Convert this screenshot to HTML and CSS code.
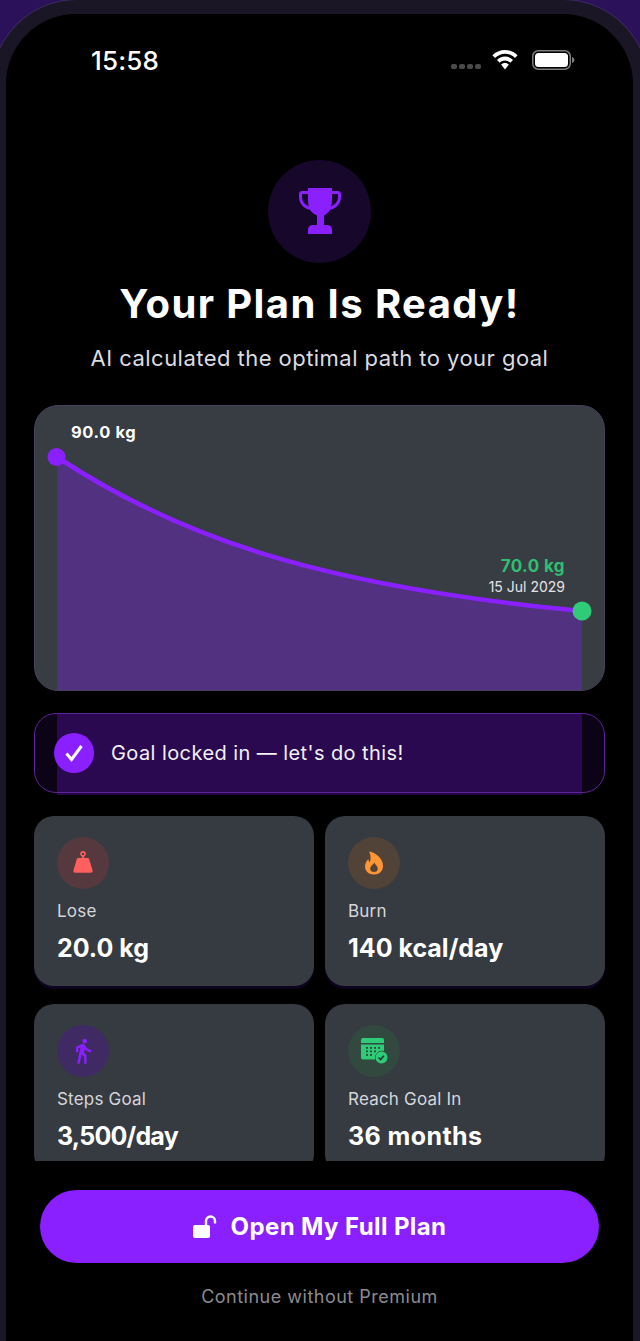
FILE: index.html
```html
<!DOCTYPE html>
<html lang="en">
<head>
<meta charset="utf-8">
<title>Your Plan Is Ready</title>
<link rel="stylesheet" href="styles.css">
</head>
<body>
<div class="bezel">
  <div class="screen">
    <div class="status">
      <span class="time">15:58</span>
      <div class="status-icons">
        <span class="signal"><i></i><i></i><i></i><i></i></span>
        <svg class="wifi" viewBox="0 0 26 20"><path d="M13 0C8 0 3.600 2 .4 5.300l2.700 2.700C5.700 5.300 9.100 3.700 13 3.700s7.300 1.600 9.900 4.300l2.700-2.700C22.400 2 18 0 13 0z"/><path d="M13 6.600c-3.200 0-6 1.300-8 3.400l2.700 2.700c1.400-1.400 3.200-2.300 5.300-2.300s3.900.9 5.300 2.300l2.700-2.700c-2-2.100-4.800-3.400-8-3.400z"/><path d="M13 13c-1.500 0-2.900.6-3.900 1.600L13 19.500l3.900-4.900c-1-1-2.400-1.600-3.900-1.600z"/></svg>
        <svg class="battery" viewBox="0 0 43 20"><rect x=".75" y=".75" width="37.500" height="18.500" rx="5.500" fill="none" stroke="#7d7d80" stroke-width="1.500"/><rect x="3" y="3" width="33" height="14" rx="3.500" fill="#fff"/><path d="M40 7v6c1.400-.4 2.400-1.600 2.400-3S41.400 7.400 40 7z" fill="#7d7d80"/></svg>
      </div>
    </div>

    <div class="scroll">
      <div class="glow"></div>
      <div class="hero-badge">
        <svg class="trophy" viewBox="0 0 42 48"><path d="M9 0h24v3h6c1.600 0 3 1.300 3 3v3c0 6.500-4.500 11.500-11 12.800-1.500 2.800-3.700 4.700-6 5.600V37h3.500c2.500 0 4.500 2 4.500 4.500V46H9v-4.500C9 39 11 37 13.500 37H18v-9.600c-2.300-.9-5.500-2.800-7-5.600C4.500 20.500 0 15.500 0 9V6c0-1.700 1.400-3 3-3h6V0zM3 6v3c0 4.200 2.600 7.600 6.800 9.200-.6-2.300-.8-5.300-.8-8.700V6H3zm36 0h-6v3.500c0 3.400-.2 6.400-.8 8.700C36.400 16.600 39 13.200 39 9V6z"/></svg>
      </div>
      <h1 class="title">Your Plan Is Ready!</h1>
      <p class="subtitle">AI calculated the optimal path to your goal</p>

      <section class="chart-card">
        <svg class="chart" viewBox="0 0 571 285">
          <path class="area" d="M23 52C156 140 306 183 548 206V285H23Z"/>
          <path class="line" d="M23 52C156 140 306 183 548 206"/>
          <circle class="dot-start" cx="22.500" cy="52" r="9"/>
          <circle class="dot-end" cx="548" cy="206" r="9.500"/>
        </svg>
        <span class="chart-start">90.0 kg</span>
        <div class="chart-end">
          <span class="chart-end-value">70.0 kg</span>
          <span class="chart-end-date">15 Jul 2029</span>
        </div>
      </section>

      <div class="locked">
        <span class="locked-check">
          <svg viewBox="0 0 24 24"><path d="M4.500 12.500l5 6L19.500 5"/></svg>
        </span>
        <span class="locked-text">Goal locked in — let's do this!</span>
      </div>

      <div class="stats">
        <article class="stat stat-top">
          <span class="stat-icon icon-red">
            <svg viewBox="0 0 24 24" width="24" height="24"><path fill-rule="evenodd" d="M12 0a2.900 2.900 0 0 1 1.100 5.580V7h3.400c.8 0 1.500.5 1.700 1.300l3.400 11.200c.3 1.200-.5 2.300-1.700 2.300H4.100c-1.200 0-2-1.100-1.700-2.300L5.800 8.300C6 7.500 6.700 7 7.500 7h3.400V5.580A2.900 2.900 0 0 1 12 0zm0 1.700a1.200 1.200 0 1 0 0 2.400 1.200 1.200 0 0 0 0-2.400z"/></svg>
          </span>
          <span class="stat-label">Lose</span>
          <strong class="stat-value">20.0 kg</strong>
        </article>
        <article class="stat stat-top">
          <span class="stat-icon icon-orange">
            <svg viewBox="0 0 24 24" width="24" height="24"><path fill-rule="evenodd" d="M7 .5c6.500 1 14 6.500 14 14.500 0 5-3.800 8.500-9 8.500s-9-3.500-9-8c0-3 1.300-5.300 3.300-7.300.2 1.300.7 2.300 1.500 3C9 8.500 9 4 7 .5zM12.200 11.500c-.3 1.900-4 3-4 6.500 0 2 1.700 3 3.800 3s3.800-1.300 3.800-3.300c0-2.700-2.600-3.800-3.600-6.200z"/></svg>
          </span>
          <span class="stat-label">Burn</span>
          <strong class="stat-value">140 kcal/day</strong>
        </article>
        <article class="stat">
          <span class="stat-icon icon-purple">
            <svg viewBox="0 0 24 24" width="28" height="28"><path d="M13.500 5.500c1.100 0 2-.9 2-2s-.9-2-2-2-2 .9-2 2 .9 2 2 2zM9.800 8.900L7 23h2.100l1.800-8 2.100 2v6h2v-7.500l-2.100-2 .6-3C14.800 12 16.800 13 19 13v-2c-1.900 0-3.500-1-4.300-2.400l-1-1.600c-.4-.6-1-1-1.700-1-.3 0-.5.1-.8.100L6 8.300V13h2V9.600l1.800-.7"/></svg>
          </span>
          <span class="stat-label">Steps Goal</span>
          <strong class="stat-value value-tight">3,500/day</strong>
        </article>
        <article class="stat">
          <span class="stat-icon icon-green">
            <svg viewBox="0 0 28 28" width="28" height="28"><path d="M3 1h19a2 2 0 0 1 2 2v3H1V3a2 2 0 0 1 2-2z"/><path fill-rule="evenodd" d="M1 7.500h23V14a7 7 0 0 0-8.800 8.500H3a2 2 0 0 1-2-2zM6 10v1.800h2V10zm4 0v1.800h2V10zm4 0v1.800h2V10zm4 0v1.800h2V10zM6 13.500v1.800h2v-1.800zm4 0v1.800h2v-1.800zm4 0v1.800h2v-1.800zM6 17v1.800h2V17zm4 0v1.800h2V17z"/><circle cx="21.500" cy="20.500" r="6"/><path d="M18.600 20.500l2 2 3.300-3.700" fill="none" stroke="#25382f" stroke-width="1.600"/></svg>
          </span>
          <span class="stat-label">Reach Goal In</span>
          <strong class="stat-value value-wide">36 months</strong>
        </article>
      </div>
    </div>

    <div class="footer">
      <button class="cta" type="button">
        <svg class="cta-lock" viewBox="0 0 24 24"><path d="M2 10h13a2 2 0 0 1 2 2v9a2 2 0 0 1-2 2H2a2 2 0 0 1-2-2v-9a2 2 0 0 1 2-2z"/><path d="M13 10V6a4.500 4.500 0 0 1 9 0v2.500" fill="none" stroke="#fff" stroke-width="2.400"/></svg>
        <span>Open My Full Plan</span>
      </button>
      <span class="skip">Continue without Premium</span>
    </div>
  </div>
</div>
</body>
</html>
```

FILE: styles.css
```css
* { box-sizing: border-box; }
html, body { margin: 0; padding: 0; }
body {
  width: 640px;
  height: 1341px;
  overflow: hidden;
  background: #2b1159;
  font-family: Inter, "Noto Sans", sans-serif;
  color: #fff;
}
.bezel {
  width: 656px;
  height: 1341px;
  margin: 0 -8px;
  padding: 14px 15px 0 14px;
  background: #1a1625;
  border-radius: 85px 85px 0 0;
  box-shadow: 0 0 0 1px #3a2a5c;
}
.screen {
  position: relative;
  height: 1327px;
  background: #000;
  border-radius: 70px 70px 0 0;
  overflow: hidden;
}
.status {
  display: flex;
  justify-content: space-between;
  align-items: center;
  height: 30px;
  margin-top: 31px;
  padding: 0 58px 0 85px;
}
.time { font-size: 26px; font-weight: 500; letter-spacing: .2px; }
.status-icons { display: flex; align-items: center; gap: 0; }
.signal { display: flex; gap: 2px; margin: 13px 11px 0 0; }
.signal i { width: 6px; height: 5px; border-radius: 2px; background: #4a4a4c; }
.wifi { width: 26px; height: 20px; fill: #fff; margin-right: 14px; }
.battery { width: 43px; height: 20px; }

.scroll {
  position: relative;
  height: 1086px;
  padding: 85px 28px 0;
  overflow: hidden;
}
.glow {
  position: absolute;
  left: 51px;
  width: 525px;
  top: 638px;
  height: 82px;
  background: rgba(60, 12, 118, .56);
}
.hero-badge {
  position: relative;
  display: flex;
  align-items: center;
  justify-content: center;
  width: 103px;
  height: 103px;
  margin: 0 auto;
  border-radius: 50%;
  background: #16072b;
}
.trophy { width: 42px; height: 48px; fill: #8a20ff; }
.title {
  position: relative;
  margin: 16px 0 0;
  height: 50px;
  font-size: 40px;
  line-height: 50px;
  font-weight: 700;
  letter-spacing: 1.4px;
  text-align: center;
}
.subtitle {
  position: relative;
  margin: 15px 0 0;
  height: 28px;
  font-size: 22px;
  line-height: 28px;
  font-weight: 400;
  letter-spacing: .46px;
  text-align: center;
  color: #dcdce0;
}
.chart-card {
  position: relative;
  height: 286px;
  margin-top: 33px;
  background: #383c43;
  border: 1px solid #46405c;
  border-radius: 24px;
  overflow: hidden;
}
.chart { display: block; width: 571px; height: 285px; margin: -1px; }
.area { fill: rgba(122, 32, 220, .4); }
.line { fill: none; stroke: #8a20ff; stroke-width: 4.500; }
.dot-start { fill: #8a20ff; }
.dot-end { fill: #2fcb78; }
.chart-start {
  position: absolute;
  left: 36px;
  top: 16px;
  font-size: 16.500px;
  line-height: 20px;
  font-weight: 700;
  letter-spacing: .6px;
}
.chart-end {
  position: absolute;
  right: 39px;
  top: 150px;
  display: flex;
  flex-direction: column;
  align-items: flex-end;
}
.chart-end-value { font-size: 17px; line-height: 21px; font-weight: 700; letter-spacing: .4px; color: #2fbf73; }
.chart-end-date { font-size: 14px; line-height: 20px; color: #e4e4e8; }

.locked {
  position: relative;
  display: flex;
  align-items: center;
  gap: 17px;
  height: 80px;
  margin-top: 22px;
  padding: 0 19px;
  background: rgba(120, 30, 220, .1);
  border: 1px solid #5f2399;
  border-radius: 22px;
}
.locked-check {
  display: flex;
  align-items: center;
  justify-content: center;
  width: 40px;
  height: 40px;
  border-radius: 50%;
  background: #8a20ff;
}
.locked-check svg { width: 24px; height: 24px; fill: none; stroke: #fff; stroke-width: 3; }
.locked-text { font-size: 20px; font-weight: 400; letter-spacing: .42px; color: #f2f2f4; }

.stats {
  position: relative;
  display: grid;
  grid-template-columns: 280px 280px;
  justify-content: space-between;
  row-gap: 18px;
  margin-top: 23px;
}
.stat {
  display: flex;
  flex-direction: column;
  height: 170px;
  padding: 21px 23px 0;
  background: #363a41;
  border-radius: 20px;
}
.stat-top { box-shadow: 0 3px 0 #0f0420; }
.stat-icon {
  display: flex;
  align-items: center;
  justify-content: center;
  width: 52px;
  height: 52px;
  border-radius: 50%;
}
.icon-red { background: #55393f; fill: #ff5f5f; }
.icon-orange { background: #524338; fill: #ff9533; }
.icon-purple { background: #402a63; fill: #8a20ff; }
.icon-green { background: #31493f; fill: #2fcb78; }
.stat-label { margin-top: 10px; font-size: 17px; line-height: 24px; letter-spacing: .2px; color: #d6d6da; }
.stat-value { margin-top: 9px; font-size: 25px; line-height: 32px; font-weight: 700; }
.value-tight { letter-spacing: -.8px; }
.value-wide { letter-spacing: .4px; }

.footer {
  display: flex;
  flex-direction: column;
  align-items: center;
  padding: 29px 28px 0 28px;
}
.cta {
  display: flex;
  align-items: center;
  justify-content: center;
  gap: 14px;
  width: 559px;
  height: 73px;
  border: 0;
  border-radius: 37px;
  background: #8a20ff;
  color: #fff;
  font-family: inherit;
  font-size: 24px;
  font-weight: 700;
  letter-spacing: .4px;
}
.cta-lock { width: 24px; height: 24px; fill: #fff; }
.skip { margin-top: 22px; font-size: 18px; line-height: 24px; letter-spacing: .5px; color: #8b8b8f; }
```
